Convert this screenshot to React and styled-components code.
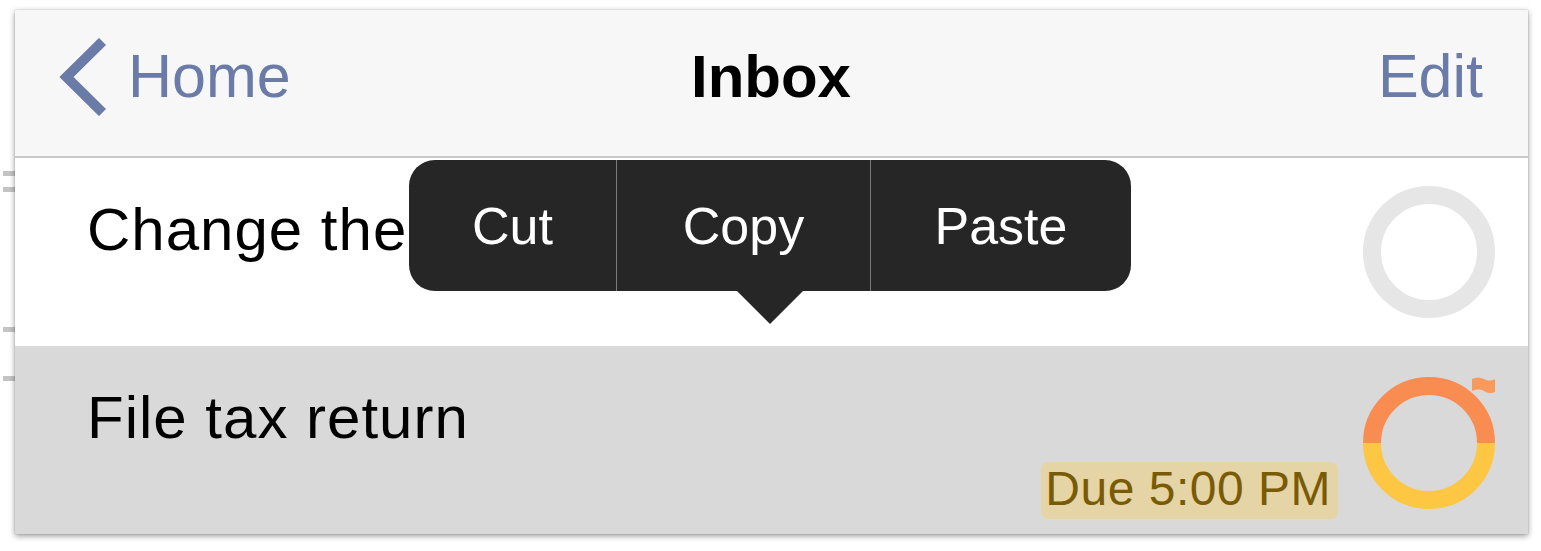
import React from 'react'
import styled, { createGlobalStyle } from 'styled-components'

const GlobalStyle = createGlobalStyle`
  html, body {
    margin: 0;
    padding: 0;
    background: #ffffff;
    font-family: "Liberation Sans", Arial, Helvetica, sans-serif;
  }
`

const Page = styled.div`
  display: flex;
  width: 1541px;
  height: 551px;
  padding-top: 10px;
  box-sizing: border-box;
  overflow: hidden;
`

const Gutter = styled.div`
  width: 15px;
  flex-shrink: 0;
  display: flex;
  flex-direction: column;
  align-items: flex-end;
  padding-top: 161px;
`

const Tick = styled.div`
  width: 12px;
  height: 5px;
  margin-top: ${(props) => props.gap}px;
  background: #c4c4c4;
`

const Panel = styled.div`
  position: relative;
  width: 1513px;
  align-self: flex-start;
  display: flex;
  flex-direction: column;
  background: #ffffff;
  box-shadow: 0 2px 6px rgba(0, 0, 0, 0.4), 0 0 1px rgba(0, 0, 0, 0.3);
`

const NavBar = styled.div`
  height: 148px;
  display: grid;
  grid-template-columns: 1fr auto 1fr;
  align-items: center;
  padding: 0 45px 13px 44px;
  box-sizing: border-box;
  background: #f7f7f7;
  border-bottom: 2px solid #c9c9c9;
`

const BackButton = styled.div`
  display: flex;
  align-items: center;
  gap: 21px;
  color: #6a7ba8;
  font-size: 61px;
  line-height: 1;
`

const Title = styled.div`
  font-size: 60px;
  font-weight: 700;
  line-height: 1;
  color: #000;
`

const EditButton = styled.div`
  justify-self: end;
  color: #6a7ba8;
  font-size: 61px;
  line-height: 1;
`

const Row = styled.div`
  height: 188px;
  display: grid;
  grid-template-columns: 1fr auto;
  column-gap: 25px;
  padding: 0 33px 0 72px;
  box-sizing: border-box;
  background: ${(props) => (props.selected ? '#d9d9d9' : '#ffffff')};
`

const Content = styled.div`
  display: flex;
  flex-direction: column;
  justify-content: space-between;
  padding: 42px 0 15px;
`

const TaskName = styled.div`
  font-size: 60px;
  line-height: 1;
  letter-spacing: 1px;
  color: #000;
  white-space: nowrap;
`

const DueBadge = styled.div`
  align-self: flex-end;
  padding: 3px 7px 6px 4px;
  border-radius: 7px;
  background: #e5d4a6;
  color: #7a5b05;
  font-size: 48px;
  letter-spacing: 0.5px;
  line-height: 1;
`

const Check = styled.svg`
  align-self: center;
  margin-top: ${(props) => props.offset || 0}px;
  overflow: visible;
`

const Menu = styled.div`
  position: absolute;
  left: 394px;
  top: 150px;
  height: 131px;
  display: flex;
  background: #262626;
  border-radius: 26px;
`

const MenuItem = styled.div`
  display: flex;
  align-items: center;
  justify-content: center;
  width: ${(props) => props.w}px;
  color: #ffffff;
  font-size: 52px;
  & + & {
    border-left: 1px solid #7a7a7a;
  }
`

const MenuArrow = styled.div`
  position: absolute;
  left: 328px;
  top: 131px;
  width: 66px;
  height: 33px;
  background: #262626;
  clip-path: polygon(0 0, 100% 0, 50% 100%);
`

const Chevron = () => (
  <svg width="48" height="78" viewBox="0 0 48 78">
    <polyline
      points="43.5,3.5 7.5,39 43.5,74.5"
      fill="none"
      stroke="#6a7ba8"
      strokeWidth="10"
      strokeMiterlimit="10"
    />
  </svg>
)

const EmptyCheck = () => (
  <Check width="132" height="132" viewBox="0 0 132 132">
    <circle cx="66" cy="66" r="57" fill="none" stroke="#e6e6e6" strokeWidth="18" />
  </Check>
)

const DueCheck = () => (
  <Check width="132" height="132" viewBox="0 0 132 132" offset={5}>
    <path d="M9 66 A57 57 0 0 1 123 66" fill="none" stroke="#f98c50" strokeWidth="18" />
    <path d="M123 66 A57 57 0 0 1 9 66" fill="none" stroke="#fdc643" strokeWidth="18" />
    <path
      d="M109 2 C113 0 117 0 121 2 S128 4 132 2 V15 C128 17 124 16 121 14 S113 12 109 14 Z"
      fill="#f79a5b"
    />
  </Check>
)

export default function App() {
  return (
    <Page>
      <GlobalStyle />
      <Gutter>
        <Tick gap={0} />
        <Tick gap={11} />
        <Tick gap={135} />
        <Tick gap={44} />
      </Gutter>
      <Panel>
        <NavBar>
          <BackButton>
            <Chevron />
            Home
          </BackButton>
          <Title>Inbox</Title>
          <EditButton>Edit</EditButton>
        </NavBar>
        <Row>
          <Content>
            <TaskName>Change the</TaskName>
          </Content>
          <EmptyCheck />
        </Row>
        <Row selected>
          <Content>
            <TaskName>File tax return</TaskName>
            <DueBadge>Due 5:00 PM</DueBadge>
          </Content>
          <DueCheck />
        </Row>
        <Menu>
          <MenuItem w={207}>Cut</MenuItem>
          <MenuItem w={253}>Copy</MenuItem>
          <MenuItem w={260}>Paste</MenuItem>
          <MenuArrow />
        </Menu>
      </Panel>
    </Page>
  )
}
